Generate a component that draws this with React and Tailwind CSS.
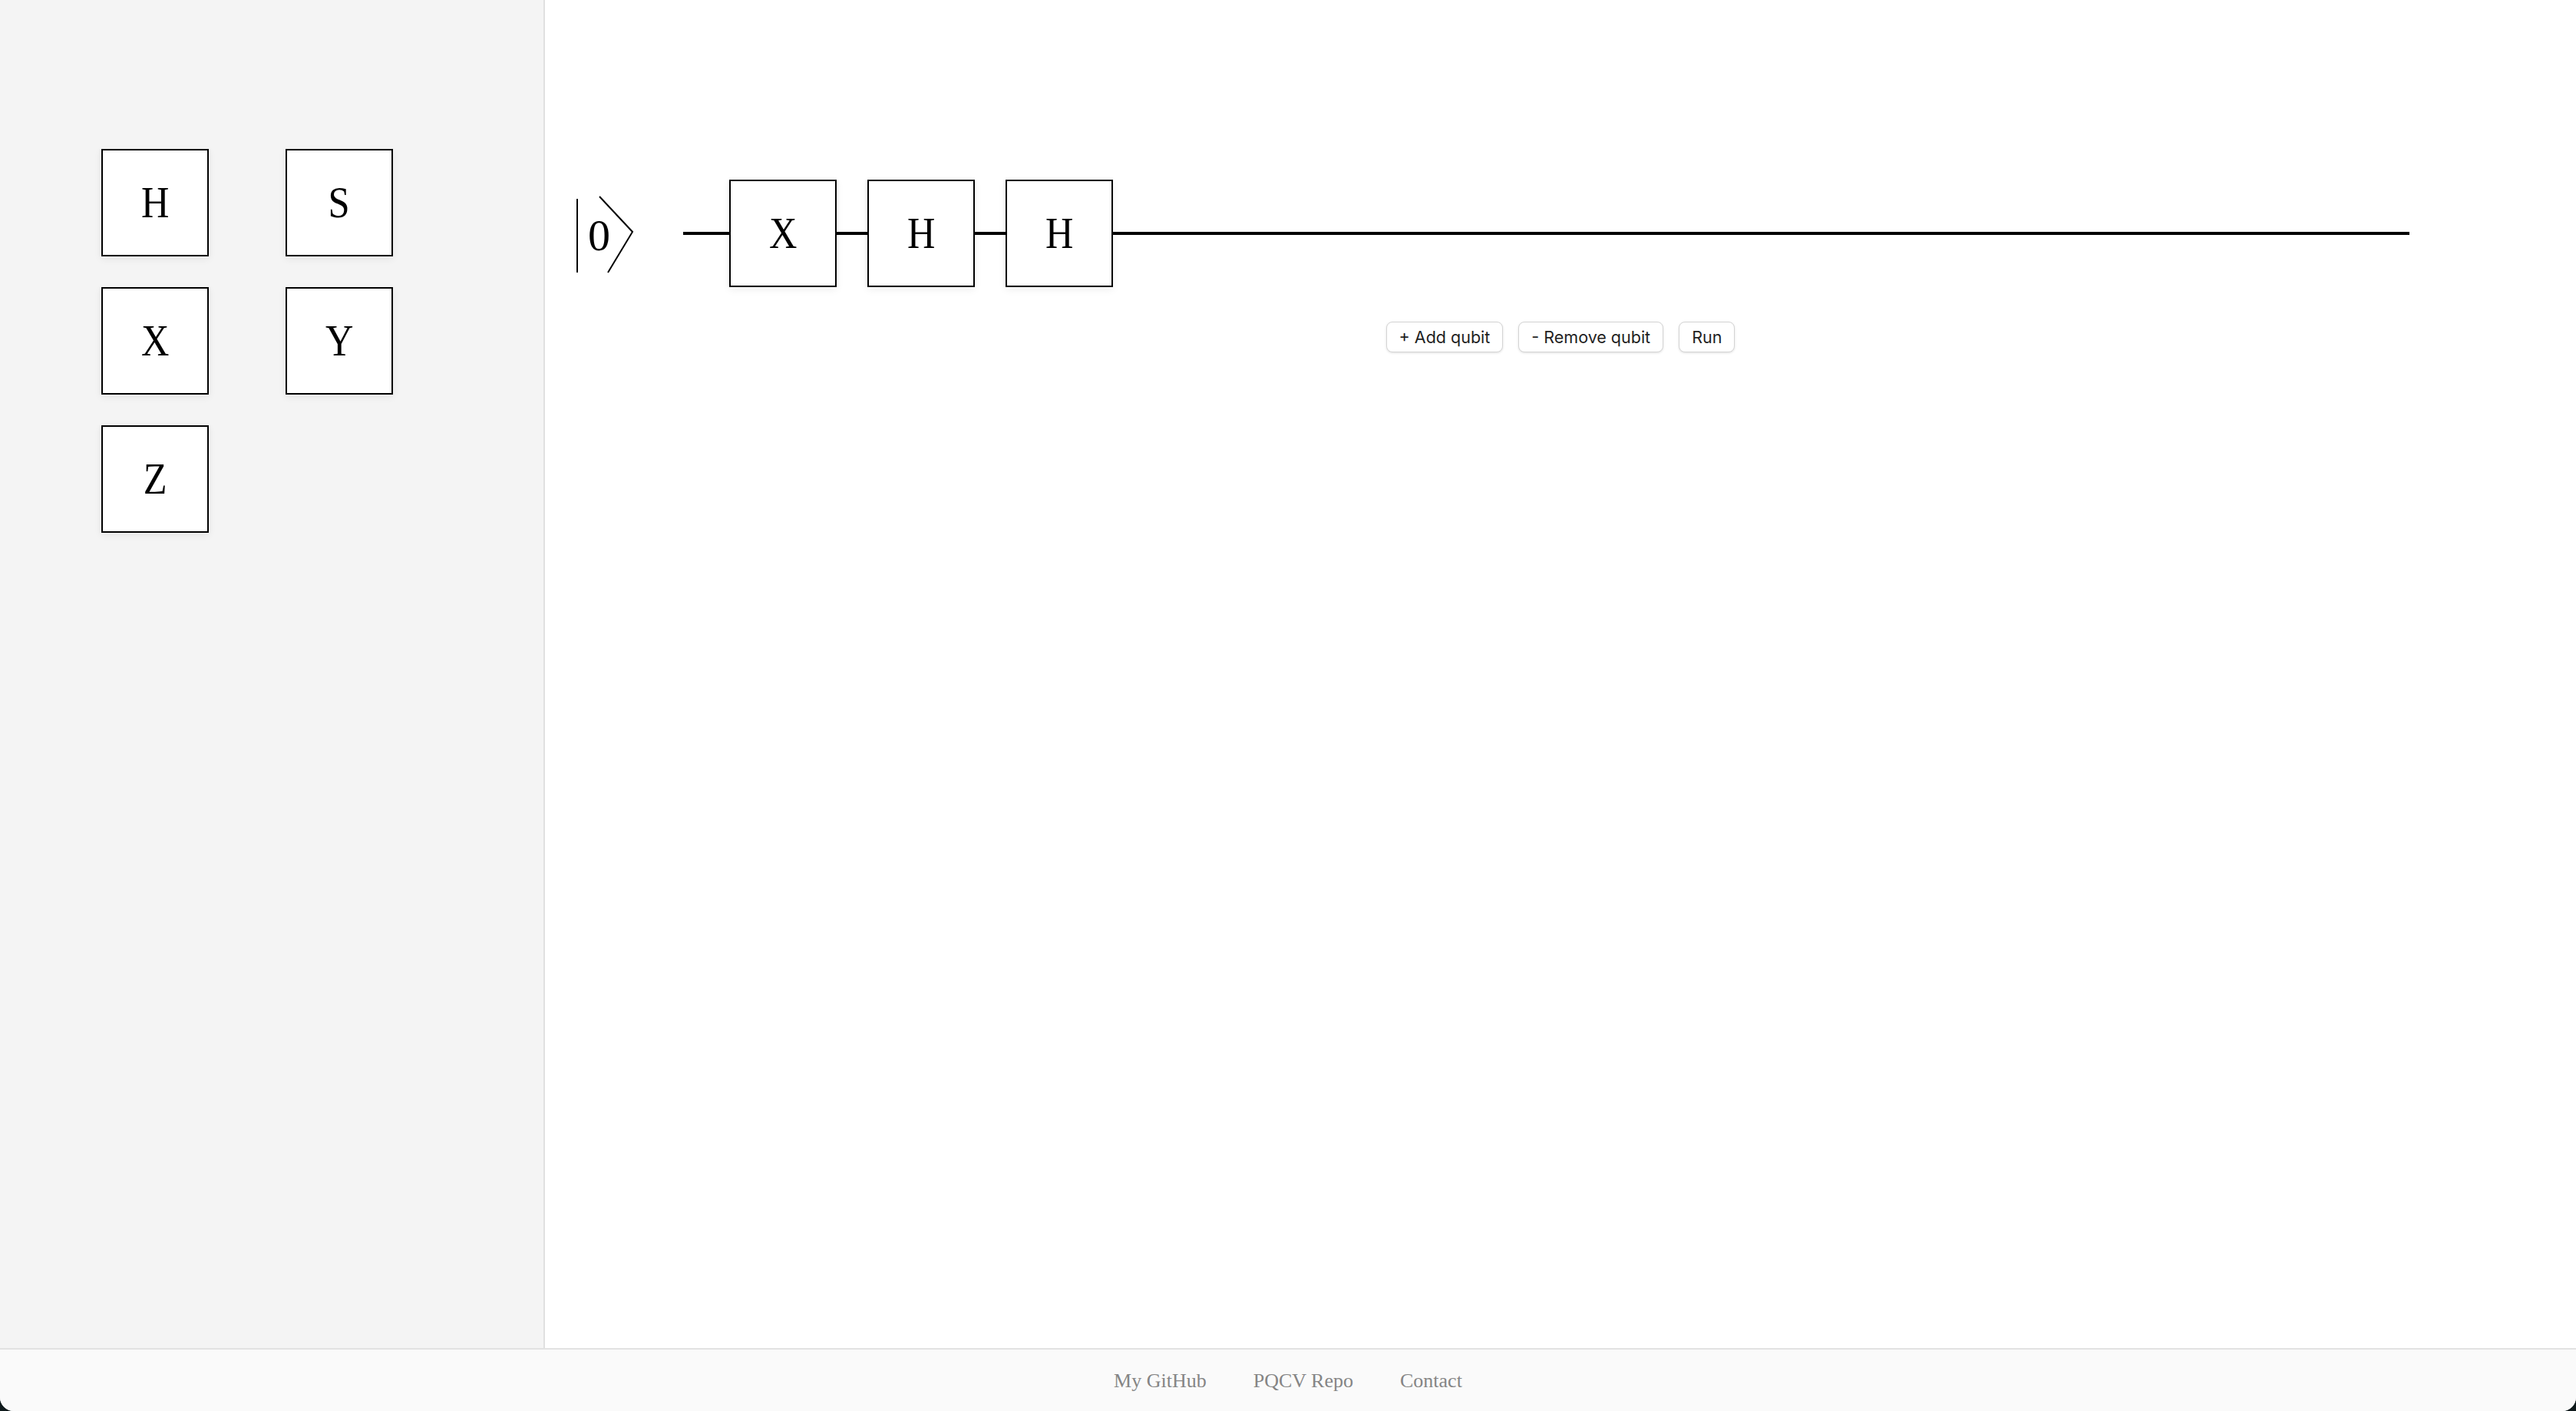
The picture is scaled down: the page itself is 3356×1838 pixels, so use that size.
import React from "react";

const serif = { fontFamily: '"Liberation Serif", "Times New Roman", serif' };

function Gate({ label }) {
  return (
    <div
      className="w-[140px] h-[140px] shrink-0 bg-white border-2 border-black flex items-center justify-center shadow-[0_3px_10px_rgba(0,0,0,0.07)]"
      style={serif}
    >
      <span className="text-[56px] leading-none inline-block scale-x-[0.9] text-black">{label}</span>
    </div>
  );
}

function Wire({ className }) {
  return <div className={"h-[4px] bg-black shrink-0 " + className} />;
}

function Ket() {
  return (
    <svg width="80" height="102" viewBox="0 0 80 102" className="shrink-0 mt-[4px]">
      <line x1="2" y1="4" x2="2" y2="100" stroke="black" strokeWidth="2" />
      <text x="16" y="71" fontSize="58" fontFamily='"Liberation Serif", serif' fill="black">0</text>
      <polyline points="31,1 74,47 42,100" fill="none" stroke="black" strokeWidth="2" />
    </svg>
  );
}

function Btn({ children }) {
  return (
    <button
      className="h-[40px] px-[16px] rounded-[8px] bg-white border border-[#d4d4d4] shadow-[0_1px_3px_rgba(0,0,0,0.12)] text-[21.5px] text-[#1f1f1f]"
      style={{ fontFamily: 'Inter, "Noto Sans", sans-serif' }}
    >
      {children}
    </button>
  );
}

export default function App() {
  return (
    <div className="w-[3356px] h-[1838px] bg-[#0f1a1c] overflow-hidden">
      <div className="w-full h-full flex flex-col bg-white rounded-b-[18px] overflow-hidden">
        <div className="flex flex-1 min-h-0">
          <aside className="w-[710px] shrink-0 bg-[#f4f4f4] border-r-2 border-[#e0e0e0]">
            <div className="ml-[132px] mt-[194px] w-[380px] flex flex-wrap gap-x-[100px] gap-y-[40px]">
              {["H", "S", "X", "Y", "Z"].map((g) => (
                <Gate key={g} label={g} />
              ))}
            </div>
          </aside>
          <main className="flex-1 bg-white pl-[40px] pr-[217px]">
            <div className="mt-[234px] h-[140px] flex items-center">
              <Ket />
              <div className="w-[60px] shrink-0" />
              <Wire className="w-[60px]" />
              <Gate label="X" />
              <Wire className="w-[40px]" />
              <Gate label="H" />
              <Wire className="w-[40px]" />
              <Gate label="H" />
              <Wire className="flex-1" />
            </div>
            <div className="mt-[45px] -mr-[177px] flex justify-center gap-[20px]">
              <Btn>+ Add qubit</Btn>
              <Btn>- Remove qubit</Btn>
              <Btn>Run</Btn>
            </div>
          </main>
        </div>
        <footer
          className="h-[82px] shrink-0 bg-[#fafafa] border-t-2 border-[#e2e2e2] flex items-center justify-center gap-[61px] text-[26px] text-[#858585]"
          style={serif}
        >
          <a>My GitHub</a>
          <a>PQCV Repo</a>
          <a>Contact</a>
        </footer>
      </div>
    </div>
  );
}
